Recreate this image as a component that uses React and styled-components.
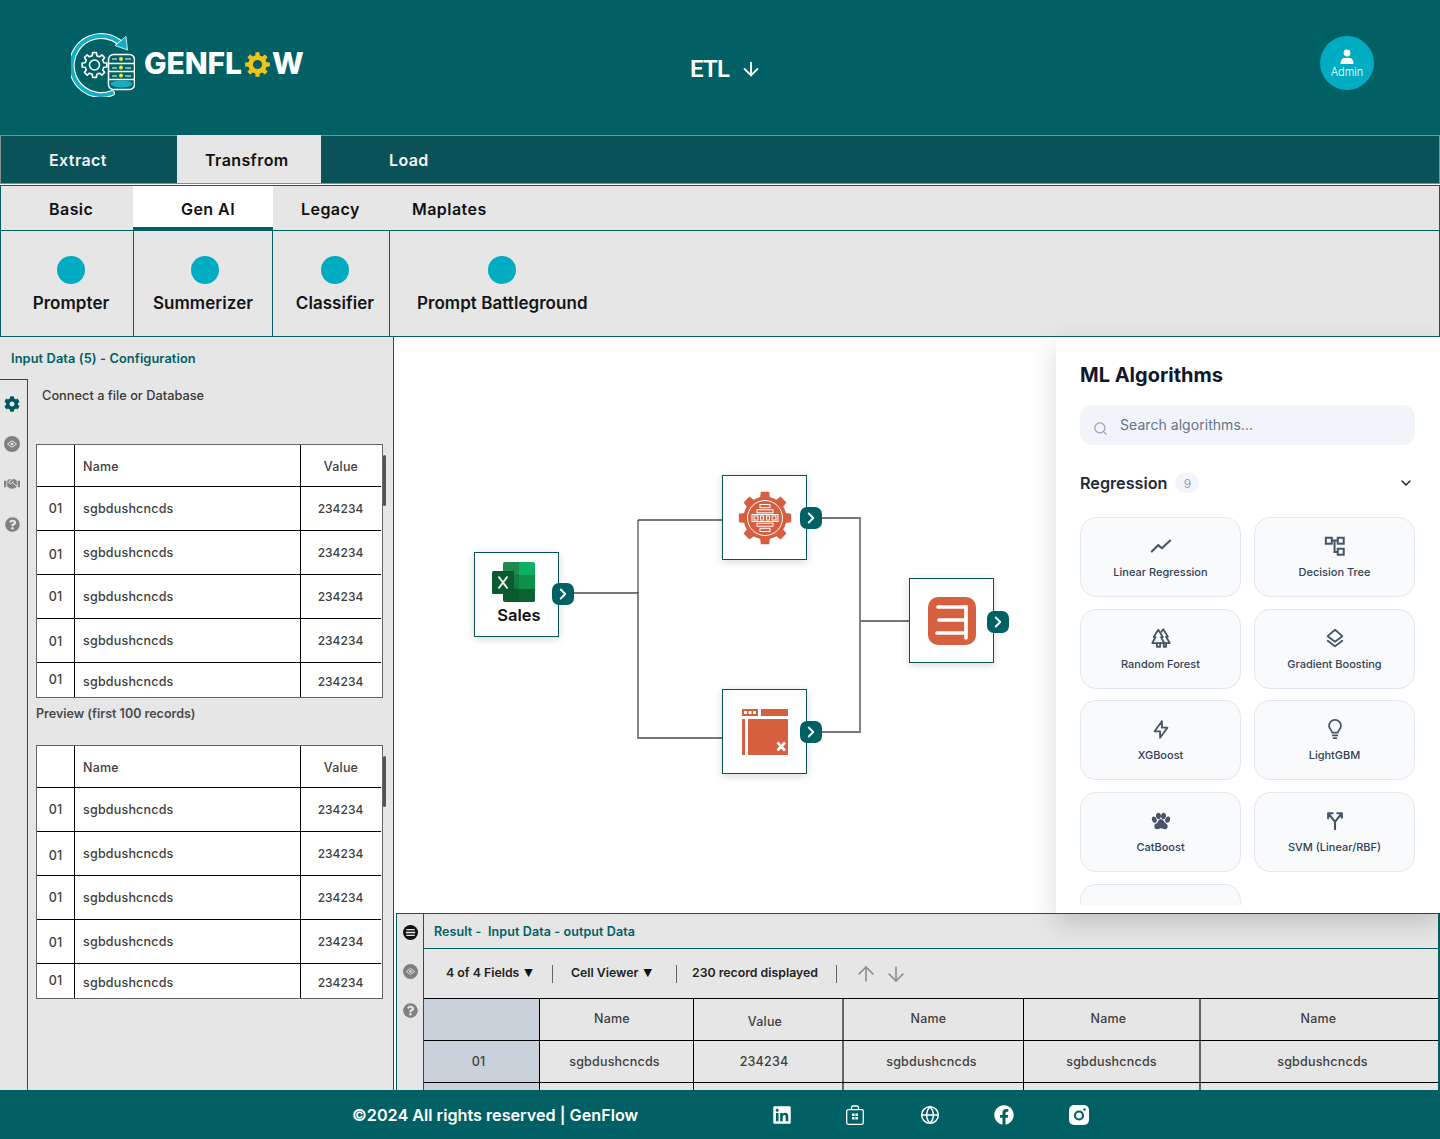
import React from "react";
import styled, { createGlobalStyle } from "styled-components";
import { ArrowUp, ArrowDown, Search, ChevronDown, ChevronRight, Globe } from "lucide-react";
import { FaCog, FaHandshake, FaQuestionCircle, FaLinkedin, FaFacebook } from "react-icons/fa";
import { TbPawFilled, TbBolt } from "react-icons/tb";

const TEAL = "#006064";
const CYAN = "#00acc1";
const GREY = "#e6e6e6";
const ORANGE = "#d65f3f";
const FONT = `"Inter", "Liberation Sans", sans-serif`;

const Global = createGlobalStyle`
  html, body { margin: 0; padding: 0; background: #fff; }
  body { font-family: ${FONT}; }
  * { box-sizing: border-box; }
`;

const Page = styled.div`
  width: 1440px; height: 1139px; display: flex; flex-direction: column; overflow: hidden;
`;

/* ---------- header ---------- */
const Header = styled.header`
  height: 135px; flex: none; background: ${TEAL};
  display: grid; grid-template-columns: 619px 1fr 54px; padding: 0 66px 0 71px; align-items: start;
`;
const Brand = styled.div`display: flex; align-items: center; margin-top: 33px; height: 64px; color: #fff;`;
const BrandWord = styled.span`
  font-weight: 800; font-size: 30px; letter-spacing: -0.1px; line-height: 1; margin-left: 9px;
  margin-top: -4px; display: flex; align-items: center;
`;
const Etl = styled.div`
  margin-top: 55px; height: 28px; display: flex; align-items: center; gap: 11px; color: #fff;
  font-family: "Roboto", sans-serif; font-weight: 600; font-size: 24px; letter-spacing: -0.8px;
`;
const Avatar = styled.div`
  margin-top: 36px; width: 54px; height: 54px; border-radius: 50%; background: ${CYAN}; color: #fff;
  display: flex; flex-direction: column; align-items: center; justify-content: center;
  font-size: 11px; line-height: 12px; font-weight: 300;
`;

/* ---------- tabs ---------- */
const MainTabs = styled.nav`
  height: 49px; flex: none; margin-bottom: 1px; background: #0b5258; border: 1px solid #7d8f90;
  display: flex; color: #fff;
`;
const MainTab = styled.div`
  display: flex; align-items: center; font-size: 16px; font-weight: 600; letter-spacing: .4px;
  margin-top: ${p => (p.$active ? "-1px" : "0")};
  height: ${p => (p.$active ? "48px" : "100%")};
  padding-top: ${p => (p.$active ? "2px" : "0")};
  width: ${p => p.$w}px; padding-left: ${p => p.$pad}px;
  background: ${p => (p.$active ? GREY : "transparent")};
  color: ${p => (p.$active ? "#111" : "#f2f2f2")};
`;
const SubTabs = styled.div`
  height: 46px; flex: none; background: ${GREY}; border: 1px solid ${TEAL}; display: flex;
`;
const SubTab = styled.div`
  width: ${p => p.$w}px; padding-left: ${p => p.$pad}px; display: flex; align-items: center;
  font-size: 16px; font-weight: 600; letter-spacing: .45px; color: #111;
  background: ${p => (p.$active ? "#fff" : "transparent")};
  border-bottom: ${p => (p.$active ? `3px solid ${TEAL}` : "0")};
  padding-top: ${p => (p.$active ? "4px" : "2px")};
`;
const Tools = styled.div`
  height: 106px; flex: none; background: ${GREY}; display: flex;
  border: 1px solid ${TEAL}; border-top: 0;
`;
const Tool = styled.div`
  width: ${p => p.$w}px; flex: ${p => (p.$grow ? 1 : "none")}; border-right: ${p => (p.$grow ? "0" : `1px solid ${TEAL}`)};
  padding-left: ${p => p.$pad || 0}px; padding-top: 25px;
  display: flex; flex-direction: column; align-items: ${p => (p.$grow ? "flex-start" : "center")};
`;
const ToolInner = styled.div`display: flex; flex-direction: column; align-items: center;`;
const ToolDot = styled.div`width: 28px; height: 28px; border-radius: 50%; background: ${CYAN}; margin-left: ${p => p.$shift || 0}px;`;
const ToolLabel = styled.div`
  margin-top: 9px; font-size: 17px; line-height: 20px; font-weight: 600; color: #151515; letter-spacing: .05px; white-space: nowrap;
`;

/* ---------- body ---------- */
const Body = styled.main`flex: 1; min-height: 0; display: flex;`;
const LeftPanel = styled.section`
  width: 394px; flex: none; background: ${GREY}; border-right: 1px solid ${TEAL};
  display: flex; flex-direction: column;
`;
const PanelTitle = styled.div`
  height: 42px; flex: none; display: flex; align-items: center; padding-left: 11px;
  font-size: 12.8px; font-weight: 600; color: ${TEAL}; letter-spacing: .1px;
`;
const LeftRow = styled.div`flex: 1; min-height: 0; display: flex;`;
const Rail = styled.div`
  width: ${p => p.$w || 28}px; flex: none; border-top: ${p => (p.$flat ? "0" : `1px solid ${TEAL}`)};
  border-right: 1px solid ${TEAL}; padding-left: ${p => p.$left || 4}px; padding-top: ${p => p.$top}px;
  display: flex; flex-direction: column; gap: ${p => p.$gap}px;
`;
const RailIcon = styled.span`
  width: 16px; height: 16px; display: flex; align-items: center; justify-content: center;
  color: ${p => p.$c || "#808080"};
`;
const LeftContent = styled.div`flex: 1; min-width: 0; padding: 8px 10px 0 8px; position: relative;`;
const ConnectText = styled.div`
  padding-left: 6px; font-size: 12.8px; line-height: 18px; font-weight: 500; color: #3a3a3a; margin-bottom: 39px;
`;
const PreviewText = styled.div`
  font-size: 12.5px; line-height: 18px; font-weight: 600; color: #4a4a4a; margin: 7px 0 22px;
`;
const Frame = styled.div`
  position: relative; width: 347px; height: 254px; background: #fff; border: 1px solid #666;
`;
const Thumb = styled.div`
  position: absolute; right: -4px; top: 10px; width: 3px; height: 51px; background: #555; border-radius: 2px;
`;
const FrameRow = styled.div`
  display: grid; grid-template-columns: 38px 226px 1fr; height: ${p => p.$h}px; margin-right: 1px;
  border-bottom: ${p => (p.$last ? "0" : "1px solid #000")};
  font-size: 12.5px; font-weight: 500; color: #404040; letter-spacing: .2px;
`;
const FrameCell = styled.div`
  display: flex; align-items: center; justify-content: ${p => (p.$left ? "flex-start" : "center")};
  padding-left: ${p => (p.$left ? "8px" : "0")};
  padding-right: ${p => (p.$num ? "1px" : "0")};
  letter-spacing: ${p => (p.$num ? "0" : "inherit")};
  font-size: ${p => (p.$num ? "12px" : "inherit")};
  padding-top: ${p => (p.$n > 0 ? p.$n * 2 : 0)}px; padding-bottom: ${p => (p.$n < 0 ? -p.$n * 2 : 0)}px;
  border-right: ${p => (p.$end ? "0" : "1px solid #000")};
`;

/* ---------- right side ---------- */
const RightCol = styled.div`flex: 1; min-width: 0; display: flex; flex-direction: column;`;
const TopArea = styled.div`height: 576px; flex: none; display: flex;`;
const Canvas = styled.div`flex: 1; position: relative; background: #fff;`;
const Wires = styled.svg`position: absolute; left: 0; top: 0;`;
const Node = styled.div`
  position: absolute; left: ${p => p.$x}px; top: ${p => p.$y}px; width: 85px; height: 85px;
  background: #fff; border: 1px solid #0b5258; box-shadow: 0 2px 8px rgba(0,0,0,.16);
  display: flex; flex-direction: column; align-items: center; justify-content: center;
`;
const Port = styled.div`
  position: absolute; right: -16px; top: ${p => p.$top}px; width: 22px; height: 22px; border-radius: 7px;
  background: ${TEAL}; color: #fff; display: flex; align-items: center; justify-content: center;
`;
const ExcelWrap = styled.div`display: flex; margin-right: 5px; margin-top: -2px;`;
const NodeLabel = styled.div`font-size: 16.5px; font-weight: 600; color: #111; line-height: 20px; margin-top: 3px; margin-left: 5px;`;

const MlPanel = styled.aside`
  width: 384px; flex: none; background: #fff; position: relative; z-index: 2;
  box-shadow: 0 10px 25px rgba(0,0,0,.16); padding: 24px 25px 8px 24px; display: flex; flex-direction: column;
`;
const MlTitle = styled.h2`margin: 0 0 16px; font-size: 20px; line-height: 28px; font-weight: 700; color: #0f172a;`;
const SearchBox = styled.div`
  height: 40px; flex: none; background: #f1f5f9; border-radius: 12px; display: flex; align-items: center;
  padding: 0 0 2px 13px; gap: 12px; font-size: 14px; color: #64748b; letter-spacing: .05px;
`;
const SearchGlyph = styled.span`display: flex; color: #94a3b8; margin-top: 8px;`;
const GroupHead = styled.div`
  display: flex; align-items: center; margin: 28px 0 24px; height: 20px; color: #1e293b; font-size: 16.2px; font-weight: 600;
`;
const CountBadge = styled.span`
  margin-left: 8px; width: 24px; height: 20px; border-radius: 10px; background: #f1f5f9; color: #94a3b8;
  display: flex; align-items: center; justify-content: center; font-size: 12px; font-weight: 400;
`;
const GroupChevron = styled.span`margin-left: auto; display: flex; color: #0f172a; padding-right: 1px;`;
const CardScroll = styled.div`flex: 1; min-height: 0; overflow: hidden;`;
const CardGrid = styled.div`display: grid; grid-template-columns: 161px 161px; gap: 11.7px 13px;`;
const Card = styled.div`
  height: 80px; background: #f8fafc; border: 1px solid #e2e8f0; border-radius: 16px;
  display: flex; flex-direction: column; align-items: center; padding-top: 17px;
  color: #475569;
`;
const CardIcon = styled.span`width: 22px; height: 22px; display: flex; align-items: center; justify-content: center;`;
const CardLabel = styled.span`margin-top: 8px; font-size: 11px; line-height: 14px; font-weight: 500; color: #334155;`;

/* ---------- result ---------- */
const Result = styled.section`
  flex: 1; min-height: 0; margin-left: 2px; display: flex; overflow: hidden; background: ${GREY};
  border: 1px solid ${TEAL}; border-width: 1px 2px 0 1px;
`;
const ResultMain = styled.div`flex: 1; min-width: 0; display: flex; flex-direction: column;`;
const ResultHead = styled.div`
  height: 35px; flex: none; border-bottom: 1px solid ${TEAL}; padding-left: 10px; display: flex; align-items: center;
  font-size: 12.5px; font-weight: 600; color: ${TEAL}; white-space: pre; letter-spacing: .1px;
`;
const ToolBar = styled.div`
  height: 50px; flex: none; display: flex; align-items: center; padding-left: 22px; font-size: 12.3px; font-weight: 600; color: #222;
  border-bottom: 1px solid #000;
`;
const ToolItem = styled.span`display: flex; align-items: center; gap: 5px; width: ${p => p.$w}px; flex: none; padding-bottom: 2px;`;
const Caret = styled.span`font-size: 11px; font-family: "DejaVu Sans", sans-serif; color: #111;`;
const ToolSep = styled.span`width: 1px; height: 18px; background: #666; flex: none; margin-right: ${p => p.$after}px;`;
const ArrowSlot = styled.span`display: flex; color: #888; flex: none; margin-right: ${p => p.$r || 0}px;`;
const ResRow = styled.div`
  display: grid; grid-template-columns: 116px 154px 150px 180px 177px 1fr; height: 42px; flex: none; border-bottom: 1px solid #000;
  font-size: 12.5px; font-weight: 500; color: #404040; letter-spacing: .2px;
`;
const ResCell = styled.div`
  display: flex; align-items: center; justify-content: center; text-align: center;
  padding-right: ${p => p.$pr || 0}px; padding-left: ${p => p.$pl || 0}px; padding-top: ${p => p.$pt || 0}px; padding-bottom: ${p => p.$pb || 0}px;
  background: ${p => (p.$key ? "#c9d2da" : "transparent")};
  border-right: ${p => (p.$end ? "0" : p.$thick ? "2px solid #666" : "1px solid #000")};
`;

/* ---------- footer ---------- */
const Footer = styled.footer`
  height: 49px; flex: none; background: ${TEAL}; color: #fff; display: flex; align-items: center; padding-left: 352px;
  font-size: 16.2px; font-weight: 600;
`;
const FootText = styled.span`width: 285px; white-space: nowrap; flex: none;`;
const FootIcons = styled.div`display: flex; gap: 54px; margin-left: 135px;`;
const FootIcon = styled.span`width: 20px; height: 20px; display: flex; align-items: center; justify-content: center;`;

/* ---------- drawings ---------- */
function gearPath(cx, cy, ro, ri, n) {
  const pts = [];
  const step = (Math.PI * 2) / n;
  for (let i = 0; i < n; i++) {
    const a = i * step - Math.PI / 2;
    const w = step * 0.2;
    const w2 = step * 0.3;
    [[ri, a - w2], [ro, a - w], [ro, a + w], [ri, a + w2]].forEach(([r, t]) =>
      pts.push(`${(cx + r * Math.cos(t)).toFixed(2)} ${(cy + r * Math.sin(t)).toFixed(2)}`)
    );
  }
  return `M${pts.join("L")}Z`;
}

const LogoMark = () => (
  <svg width="64" height="64" viewBox="0 0 64 64" fill="none">
    <path d="M48 9A29.5 29.5 0 1 0 41 60" stroke="#fff" strokeWidth="6" strokeLinecap="round" />
    <path d="M48 9A29.5 29.5 0 1 0 41 60" stroke="#12aec4" strokeWidth="3.8" strokeLinecap="round" />
    <path d="M55 3.500L56.500 17L44 12.500Z" fill="#12aec4" stroke="#fff" strokeWidth=".8" />
    <path d={gearPath(23.5, 32, 12.5, 9.6, 8)} stroke="#fff" strokeWidth="1.6" strokeLinejoin="round" />
    <circle cx="23.5" cy="32" r="5" stroke="#fff" strokeWidth="1.6" />
    <rect x="37.5" y="21.5" width="26" height="35" rx="5" stroke="#fff" strokeWidth="1.5" />
    <path d="M38 30.5H63M38 38.5H63M38 46.5H63" stroke="#fff" strokeWidth="1.3" />
    <path d="M41 26H46M54 26H60M41 35H46M54 35H60M41 43H46M54 43H60" stroke="#fff" strokeWidth="1" />
    <circle cx="50" cy="26" r="2" fill="#e6e53a" />
    <circle cx="50" cy="34.5" r="2" fill="#e6e53a" />
    <circle cx="50" cy="42.5" r="2" fill="#e6e53a" />
    <ellipse cx="50.5" cy="51" rx="11" ry="3.4" fill="#12aec4" />
  </svg>
);

const BrandGear = () => (
  <svg width="25" height="25" viewBox="0 0 25 25" style={{ margin: "3px 2px 0 3px" }}>
    <path d={gearPath(12.5, 12.5, 12.5, 9.3, 8)} fill="#f2c417" fillRule="evenodd" />
    <circle cx="12.5" cy="12.5" r="4.6" fill={TEAL} />
  </svg>
);

const UserGlyph = () => (
  <svg width="16" height="17" viewBox="0 0 16 17" fill="#fff">
    <circle cx="8" cy="4" r="3.4" />
    <path d="M1.5 15c0-4 2-6 3.5-6h6c1.5 0 3.500 2 3.500 6z" />
  </svg>
);

const EyeDisc = ({ size = 16 }) => (
  <svg width={size} height={size} viewBox="0 0 16 16">
    <circle cx="8" cy="8" r="8" fill="#808080" />
    <path d="M3.500 8L8 4.800L12.500 8L8 11.200Z" fill="none" stroke="#e6e6e6" strokeWidth="1" />
    <circle cx="8" cy="8" r="1.300" fill="#e6e6e6" />
  </svg>
);

const ListDisc = () => (
  <svg width="15" height="15" viewBox="0 0 16 16">
    <circle cx="8" cy="8" r="8" fill="#111" />
    <path d="M3.500 5H12.500M3 8H13M3.500 11H12.500" stroke="#e6e6e6" strokeWidth="1.400" />
  </svg>
);

const ExcelGlyph = () => (
  <svg width="44" height="40" viewBox="0 0 44 40">
    <path d="M11 2a2 2 0 0 1 2-2h14v13H11Z" fill="#1f8a4c" />
    <path d="M27 0H41a2 2 0 0 1 2 2V13H27Z" fill="#0eb164" />
    <path d="M11 13H27V27H11Z" fill="#107c41" />
    <path d="M27 13H43V27H27Z" fill="#0f9049" />
    <path d="M11 27H43V38a2 2 0 0 1-2 2H13a2 2 0 0 1-2-2Z" fill="#0a5a30" />
    <path d="M27 27H43V38a2 2 0 0 1-2 2H27Z" fill="#0b6235" />
    <rect x="0" y="9" width="22" height="23" rx="1.500" fill="#0b5a2f" />
    <path d="M6.500 14.500L15.500 26.500M15.500 14.500L6.500 26.500" stroke="#f3f7f4" strokeWidth="2" />
  </svg>
);

const GearNodeGlyph = () => (
  <svg width="54" height="54" viewBox="0 0 54 54">
    <path d={gearPath(27, 27, 26.5, 21, 8)} fill={ORANGE} />
    <circle cx="27" cy="27" r="21.500" fill={ORANGE} />
    <circle cx="27" cy="27" r="17.500" fill="none" stroke="#fff" strokeWidth="1" />
    <g fill="none" stroke="#fff" strokeWidth="1">
      <rect x="22" y="13.500" width="10" height="3.200" />
      <rect x="19" y="18.800" width="16" height="3" />
      <rect x="14" y="23.500" width="26" height="7" />
      <rect x="16" y="25" width="4" height="4" />
      <rect x="22.500" y="25" width="3" height="4" />
      <rect x="28.500" y="25" width="3" height="4" />
      <rect x="34" y="25" width="4" height="4" />
      <rect x="19" y="32.200" width="16" height="3" />
      <rect x="22" y="37.300" width="10" height="3.200" />
    </g>
  </svg>
);

const WindowGlyph = () => (
  <svg width="46" height="46" viewBox="0 0 46 46">
    <rect x="0" y="0" width="16" height="7" fill={ORANGE} />
    <path d="M2 2h3v3H2zM6.500 2h3v3h-3zM11 2h3v3h-3z" fill="#fff" />
    <rect x="19" y="0" width="27" height="7" fill={ORANGE} />
    <rect x="0" y="10" width="3" height="36" fill={ORANGE} />
    <rect x="6" y="10" width="40" height="36" fill={ORANGE} />
    <path d="M35.500 33.500L43 41.500M43 33.500L35.500 41.500" stroke="#fff" strokeWidth="2.600" />
  </svg>
);

const ReportGlyph = () => (
  <svg width="48" height="48" viewBox="0 0 48 48">
    <rect x="0" y="0" width="48" height="48" rx="10" fill={ORANGE} />
    <path d="M10 10H38V41M11 23H38M9 36H38" fill="none" stroke="#fff" strokeWidth="3.600" strokeLinecap="round" />
  </svg>
);

const iconProps = { width: 22, height: 22, viewBox: "0 0 24 24", fill: "none", stroke: "currentColor", strokeWidth: 2, strokeLinecap: "round", strokeLinejoin: "round" };
const LineChartIcon = () => <svg {...iconProps} strokeWidth="2.300"><path d="M2 18l7-7 4 3.500 9-8.500" /></svg>;
const TreeIcon = () => (
  <svg {...iconProps} strokeLinecap="butt" strokeLinejoin="miter" strokeWidth="2.200">
    <rect x="2" y="3" width="6.500" height="6.500" /><rect x="15" y="3" width="6.500" height="6.500" /><rect x="15" y="15" width="6.500" height="6.500" />
    <path d="M8.500 6h6.500M11.500 6v12.500h3.500" />
  </svg>
);
const ForestIcon = () => (
  <svg {...iconProps} width="24" height="24">
    <path d="M9 3L4 11H6L2.500 17.500H15.500L12 11H14Z" />
    <path d="M12.500 5L14.500 2.500L19.500 10.500H17.500L21.500 17.500H16" />
    <path d="M7.500 17.500V21.500H11V17.500M15 17.500V21.500H17.500V17.500" />
  </svg>
);
const StackIcon = () => <svg {...iconProps}><path d="M12 3l8 7-8 6-8-6z" /><path d="M4 15l8 6 8-6" /></svg>;
const BulbIcon = () => (
  <svg {...iconProps} width="24" height="24">
    <path d="M9 16c0-2.200-3.500-3.500-3.500-7.500a6.500 6.500 0 0 1 13 0c0 4-3.500 5.300-3.500 7.500z" />
    <path d="M9.500 19h5M10.500 22h3" />
  </svg>
);
const ForkIcon = () => (
  <svg {...iconProps} strokeWidth="2.300"><path d="M12 21v-8L5 4M12 13l7-9M4.500 9V3.500H9.500M14.500 3.500h5v5" /></svg>
);

const StoreIcon = () => (
  <svg width="18" height="20" viewBox="0 0 18 20" fill="none" stroke="#fff" strokeWidth="1.300" style={{ marginLeft: -2 }}>
    <rect x=".7" y="4.700" width="16.600" height="14.600" rx="1.500" />
    <path d="M5.500 4.500V2.500a1.500 1.500 0 0 1 1.500-1.500h4a1.500 1.500 0 0 1 1.500 1.500v2" />
    <path d="M6 8.500h2.600v2.600H6zM9.400 8.500H12v2.600H9.400zM6 11.900h2.600v2.600H6zM9.400 11.900H12v2.600H9.400z" fill="#fff" stroke="none" />
  </svg>
);
const InstaIcon = () => (
  <svg width="20" height="20" viewBox="0 0 20 20" style={{ marginLeft: 2, flex: "none" }}>
    <rect width="20" height="20" rx="5" fill="#fff" />
    <circle cx="10" cy="10.500" r="4" fill="none" stroke={TEAL} strokeWidth="2.200" />
    <circle cx="15.500" cy="4.500" r="1.200" fill={TEAL} />
  </svg>
);

/* ---------- data ---------- */
const ROWS = [
  { h: 44, n: 0 },
  { h: 44, n: 1.5 },
  { h: 44, n: 0 },
  { h: 44, n: 0.5 },
  { h: 34, n: -1, last: true },
];

const DataTable = () => (
  <Frame>
    <Thumb />
    <FrameRow $h={42}>
      <FrameCell />
      <FrameCell $left $n={1}>Name</FrameCell>
      <FrameCell $end $n={1}>Value</FrameCell>
    </FrameRow>
    {ROWS.map((r, i) => (
      <FrameRow key={i} $h={r.h} $last={r.last}>
        <FrameCell $n={r.n}>01</FrameCell>
        <FrameCell $left $n={r.last ? 1 : 0}>sgbdushcncds</FrameCell>
        <FrameCell $end $num $n={r.last ? 1 : 0}>234234</FrameCell>
      </FrameRow>
    ))}
  </Frame>
);

const CARDS = [
  ["Linear Regression", <LineChartIcon />],
  ["Decision Tree", <TreeIcon />],
  ["Random Forest", <ForestIcon />],
  ["Gradient Boosting", <StackIcon />],
  ["XGBoost", <TbBolt size={23} />],
  ["LightGBM", <BulbIcon />],
  ["CatBoost", <TbPawFilled size={26} />],
  ["SVM (Linear/RBF)", <ForkIcon />],
];

const RES_HEAD = [
  { t: "Name", pr: 9 }, { t: "Value", pr: 6, pt: 4, thick: true }, { t: "Name", pr: 10 },
  { t: "Name", pr: 6, thick: true }, { t: "Name", thick: true, pr: 2 },
];
const RES_BODY = [
  { t: "sgbdushcncds", pr: 4 }, { t: "234234", pr: 8, thick: true }, { t: "sgbdushcncds", pr: 4 },
  { t: "sgbdushcncds", thick: true }, { t: "sgbdushcncds", pl: 6, thick: true },
];

const Chevron = () => <ChevronRight size={18} strokeWidth={2.5} />;

export default function App() {
  return (
    <Page>
      <Global />
      <Header>
        <Brand>
          <LogoMark />
          <BrandWord>GENFL<BrandGear />W</BrandWord>
        </Brand>
        <Etl>ETL <ArrowDown size={22} strokeWidth={2} /></Etl>
        <Avatar><UserGlyph />Admin</Avatar>
      </Header>

      <MainTabs>
        <MainTab $w={176} $pad={48}>Extract</MainTab>
        <MainTab $w={144} $pad={28} $active>Transfrom</MainTab>
        <MainTab $w={200} $pad={68}>Load</MainTab>
      </MainTabs>

      <SubTabs>
        <SubTab $w={132} $pad={48}>Basic</SubTab>
        <SubTab $w={140} $pad={48} $active>Gen AI</SubTab>
        <SubTab $w={111} $pad={28}>Legacy</SubTab>
        <SubTab $w={200} $pad={28}>Maplates</SubTab>
      </SubTabs>

      <Tools>
        <Tool $w={133} $pad={8}><ToolInner><ToolDot /><ToolLabel>Prompter</ToolLabel></ToolInner></Tool>
        <Tool $w={139}><ToolInner><ToolDot $shift={4} /><ToolLabel>Summerizer</ToolLabel></ToolInner></Tool>
        <Tool $w={117} $pad={8}><ToolInner><ToolDot /><ToolLabel>Classifier</ToolLabel></ToolInner></Tool>
        <Tool $grow $pad={27}><ToolInner><ToolDot /><ToolLabel>Prompt Battleground</ToolLabel></ToolInner></Tool>
      </Tools>

      <Body>
        <LeftPanel>
          <PanelTitle>Input Data (5) - Configuration</PanelTitle>
          <LeftRow>
            <Rail $top={16} $gap={24}>
              <RailIcon $c="#00595c"><FaCog size={16} /></RailIcon>
              <RailIcon><EyeDisc /></RailIcon>
              <RailIcon><FaHandshake size={16} /></RailIcon>
              <RailIcon><FaQuestionCircle size={15} /></RailIcon>
            </Rail>
            <LeftContent>
              <ConnectText>Connect a file or Database</ConnectText>
              <DataTable />
              <PreviewText>Preview (first 100 records)</PreviewText>
              <DataTable />
            </LeftContent>
          </LeftRow>
        </LeftPanel>

        <RightCol>
          <TopArea>
            <Canvas>
              <Wires width="662" height="576" viewBox="0 0 662 576" fill="none">
                <g stroke="#777" strokeWidth="1.800">
                  <path d="M180 256H244V401H328" />
                  <path d="M244 183H328" />
                  <path d="M427 181H466V395H427" />
                  <path d="M466 284H515" />
                </g>
                <path d="M244 183V256" stroke="#222" strokeWidth="1" />
              </Wires>
              <Node $x={80} $y={215}>
                <ExcelWrap><ExcelGlyph /></ExcelWrap>
                <NodeLabel>Sales</NodeLabel>
                <Port $top={30}><Chevron /></Port>
              </Node>
              <Node $x={328} $y={138}>
                <GearNodeGlyph />
                <Port $top={31}><Chevron /></Port>
              </Node>
              <Node $x={328} $y={352}>
                <WindowGlyph />
                <Port $top={31}><Chevron /></Port>
              </Node>
              <Node $x={515} $y={241}>
                <ReportGlyph />
                <Port $top={32}><Chevron /></Port>
              </Node>
            </Canvas>
            <MlPanel>
              <MlTitle>ML Algorithms</MlTitle>
              <SearchBox>
                <SearchGlyph><Search size={15} /></SearchGlyph>
                Search algorithms...
              </SearchBox>
              <GroupHead>
                Regression
                <CountBadge>9</CountBadge>
                <GroupChevron><ChevronDown size={16} /></GroupChevron>
              </GroupHead>
              <CardScroll>
                <CardGrid>
                  {CARDS.map(([label, icon]) => (
                    <Card key={label}>
                      <CardIcon>{icon}</CardIcon>
                      <CardLabel>{label}</CardLabel>
                    </Card>
                  ))}
                  <Card />
                </CardGrid>
              </CardScroll>
            </MlPanel>
          </TopArea>

          <Result>
            <Rail $flat $w={27} $left={5} $top={10} $gap={23}>
              <RailIcon $c="#111"><ListDisc /></RailIcon>
              <RailIcon><EyeDisc size={15} /></RailIcon>
              <RailIcon><FaQuestionCircle size={15} /></RailIcon>
            </Rail>
            <ResultMain>
              <ResultHead>Result -  Input Data - output Data</ResultHead>
              <ToolBar>
                <ToolItem $w={106}>4 of 4 Fields <Caret>▼</Caret></ToolItem>
                <ToolSep $after={18} />
                <ToolItem $w={105}>Cell Viewer <Caret>▼</Caret></ToolItem>
                <ToolSep $after={15} />
                <ToolItem $w={144}>230 record displayed</ToolItem>
                <ToolSep $after={17} />
                <ArrowSlot $r={6}><ArrowUp size={24} strokeWidth={1.5} /></ArrowSlot>
                <ArrowSlot><ArrowDown size={24} strokeWidth={1.5} /></ArrowSlot>
              </ToolBar>
              <ResRow>
                <ResCell $key />
                {RES_HEAD.map((c, i) => (
                  <ResCell key={i} $pr={c.pr} $pt={c.pt} $pb={c.pt ? 0 : 2} $thick={c.thick} $end={i === 4}>{c.t}</ResCell>
                ))}
              </ResRow>
              <ResRow>
                <ResCell $key $pr={6}>01</ResCell>
                {RES_BODY.map((c, i) => (
                  <ResCell key={i} $pr={c.pr} $pl={c.pl} $thick={c.thick} $end={i === 4}>{c.t}</ResCell>
                ))}
              </ResRow>
              <ResRow>
                <ResCell $key />
                {RES_BODY.map((c, i) => (
                  <ResCell key={i} $thick={c.thick} $end={i === 4} />
                ))}
              </ResRow>
            </ResultMain>
          </Result>
        </RightCol>
      </Body>

      <Footer>
        <FootText>©2024 All rights reserved | GenFlow</FootText>
        <FootIcons>
          <FootIcon><FaLinkedin size={20} /></FootIcon>
          <FootIcon><StoreIcon /></FootIcon>
          <FootIcon><Globe size={22} strokeWidth={1.8} /></FootIcon>
          <FootIcon><FaFacebook size={20} /></FootIcon>
          <FootIcon><InstaIcon /></FootIcon>
        </FootIcons>
      </Footer>
    </Page>
  );
}
